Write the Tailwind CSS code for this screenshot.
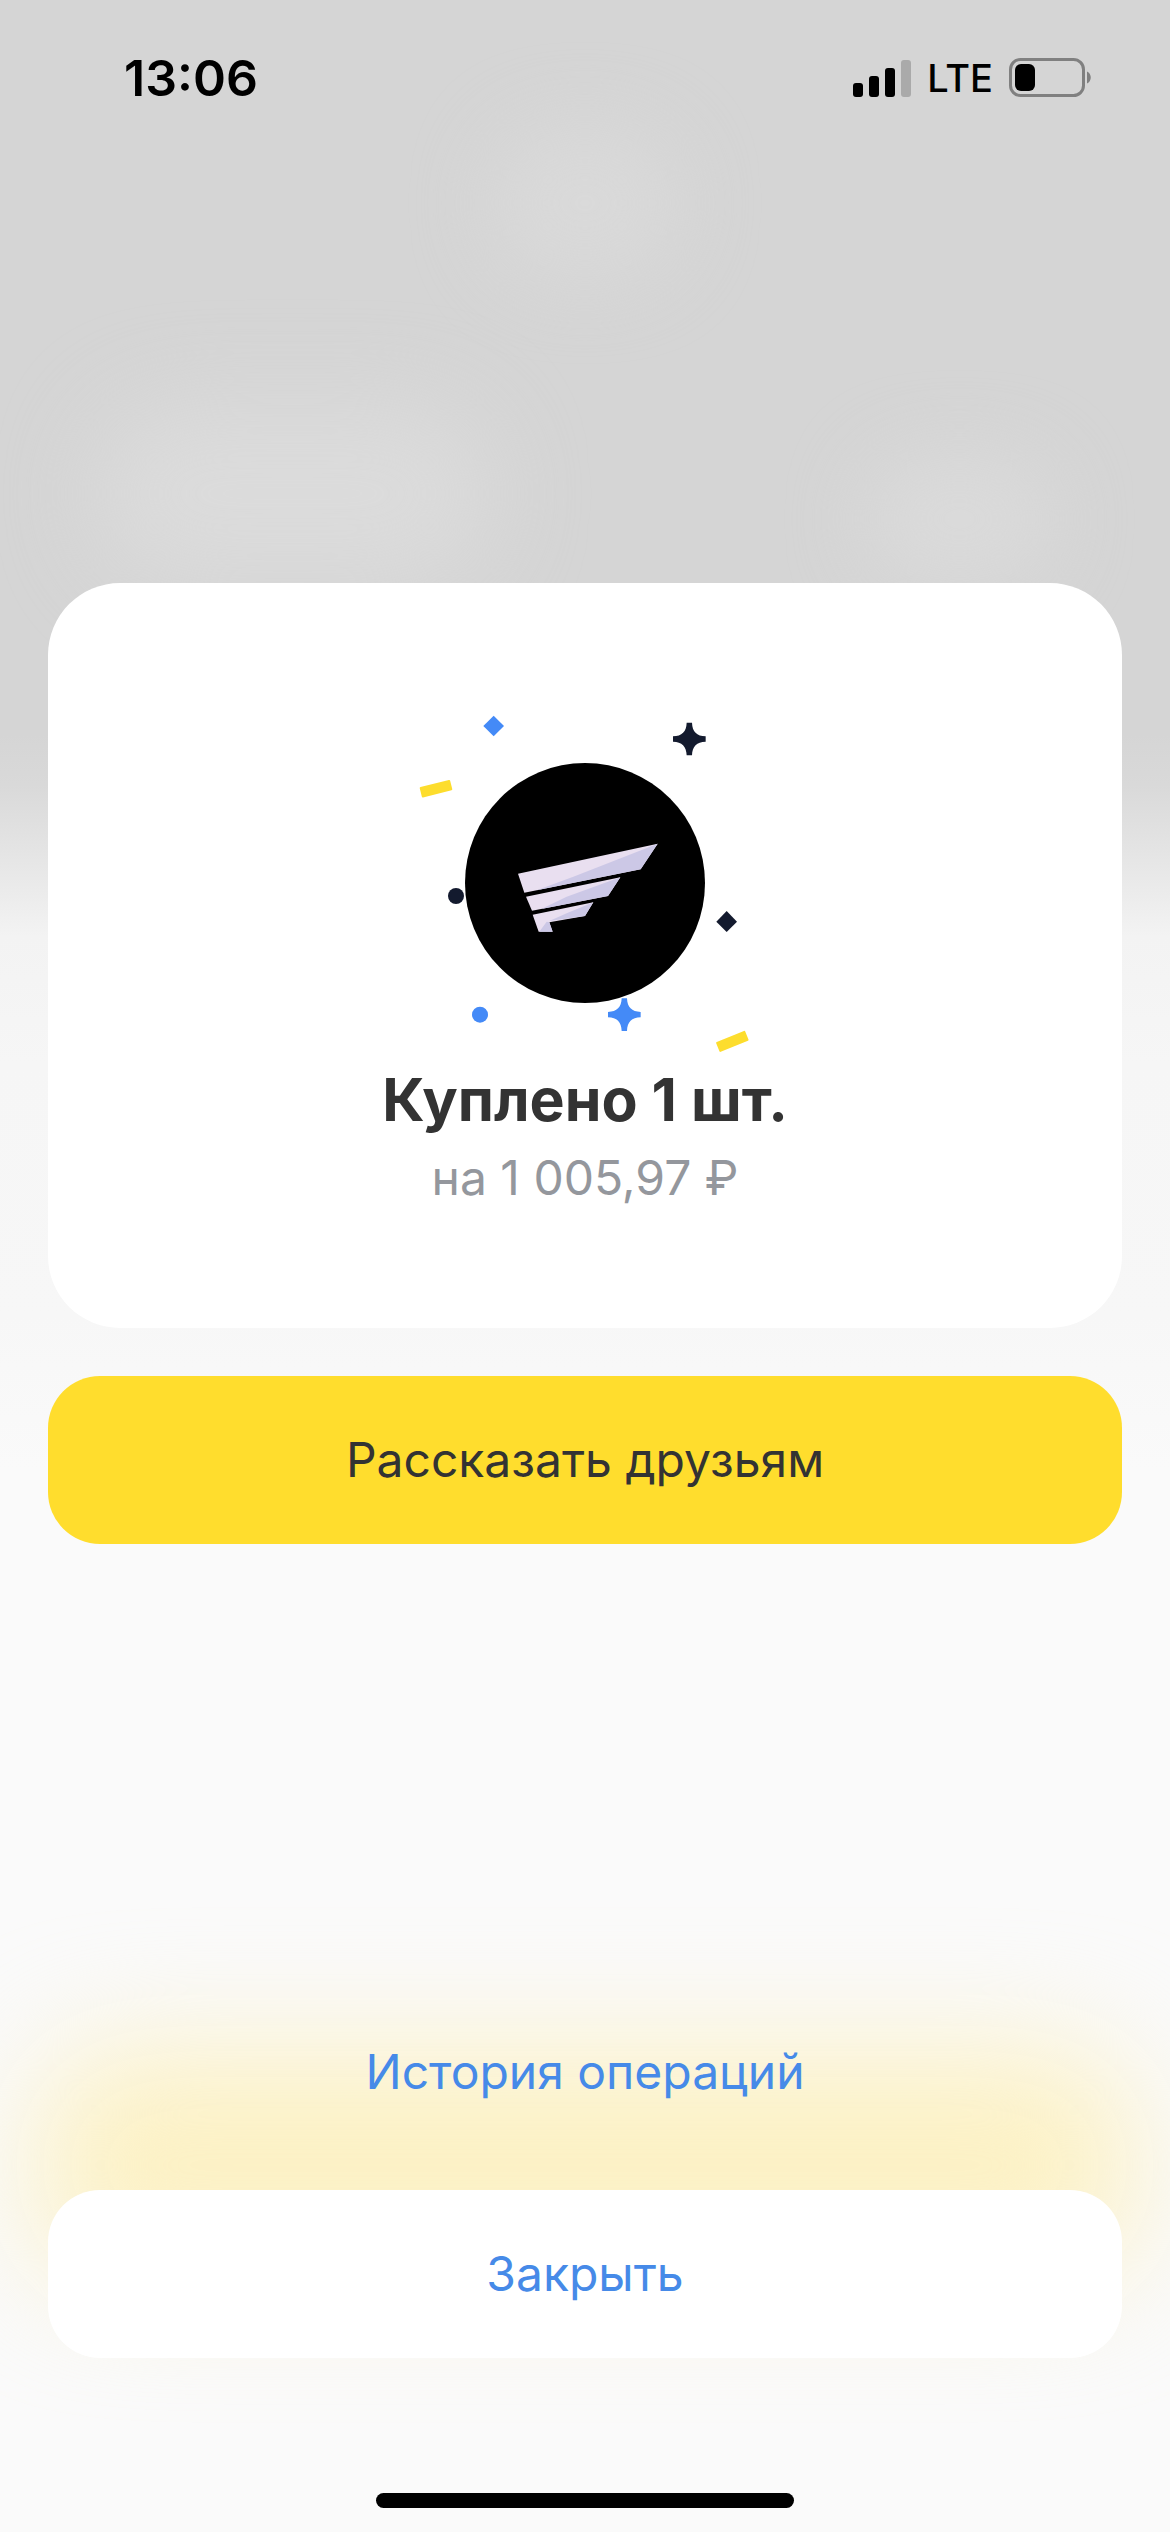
<!DOCTYPE html>
<html lang="ru">
<head>
    <meta charset="UTF-8">
    <meta name="viewport" content="width=device-width, initial-scale=1.0">
    <title>Покупка</title>
    <script src="https://cdn.jsdelivr.net/npm/@tailwindcss/browser@4"></script>
</head>
<body class="bg-[#fafafa] font-['Inter','Noto_Sans',sans-serif]">
<div class="relative isolate flex flex-col min-h-screen overflow-hidden bg-[linear-gradient(to_bottom,#d5d5d5_0%,#d5d5d5_29%,#d9d9d9_31%,#e6e6e6_34%,#f3f3f3_37%,#f6f6f6_42%,#f7f7f7_52%,#fafafa_58%)]">

    <!-- Blurred backdrop -->
    <div class="absolute inset-0 -z-10" aria-hidden="true">
        <div class="absolute top-[5%] left-[42%] w-[16%] h-[6%] rounded-full bg-[#d9d9d9] blur-[36px]"></div>
        <div class="absolute top-[16%] left-[8%] w-[34%] h-[7%] rounded-full bg-[#dbdbdb] blur-[44px]"></div>
        <div class="absolute top-[18%] left-[74%] w-[16%] h-[5%] rounded-full bg-[#dadada] blur-[36px]"></div>
        <div class="absolute bottom-[10%] left-[3%] right-[3%] h-[9%] rounded-[80px] bg-[#fcf1c4] blur-[60px]"></div>
    </div>

    <!-- Status bar -->
    <header class="flex items-center justify-between h-[156px] pl-[124px] pr-[78px] text-black">
        <span class="text-[50px] leading-[60px] font-semibold">13:06</span>
        <div class="flex items-center gap-4">
            <svg class="w-[58px] h-[38px]" viewBox="0 0 58 38" aria-hidden="true">
                <rect x="0" y="24" width="10" height="14" rx="3"/>
                <rect x="16" y="17" width="10" height="21" rx="3"/>
                <rect x="32" y="9" width="10" height="29" rx="3"/>
                <rect x="48" y="1" width="10" height="37" rx="3" fill="#aaaaaa"/>
            </svg>
            <span class="text-[38px] leading-[60px] font-medium">LTE</span>
            <svg class="w-[83px] h-[40px]" viewBox="0 0 83 40" aria-hidden="true">
                <rect x="1.5" y="1.5" width="73" height="36" rx="10" fill="none" stroke="#808080" stroke-width="3"/>
                <rect x="6" y="6" width="20" height="27" rx="6"/>
                <path d="M78 13.500c5 2 5 10 0 12z" fill="#808080"/>
            </svg>
        </div>
    </header>

    <main class="flex flex-col flex-grow px-12 pt-[427px] text-[48px] leading-[60px]">
        <section class="flex flex-col items-center bg-white rounded-[72px] pt-[117px] pb-[120px] text-center">
            <svg class="w-[370px] h-[370px]" viewBox="0 0 1110 1110" role="img" aria-label="Логотип">
                <defs>
                    <path id="spark" d="M-8-49H8C9-22 22-9 49-8V8C22 9 9 22 8 49H-8C-9 22-22 9-49 8V-8C-22-9-9-22-8-49z"/>
                </defs>
                <circle cx="555" cy="549" r="360"/>
                <!-- Wing -->
                <path d="M354 521L773 431L722 508L373 578z" fill="#e9dff0"/>
                <path d="M773 431L722 508L410 571L520 530z" fill="#ccc8e6"/>
                <path d="M378 590L661 532L624 588L396 632z" fill="#e9dff0"/>
                <path d="M661 532L624 588L424 627L500 590z" fill="#ccc8e6"/>
                <path d="M398 644L580 607L555 648L448 667L458 695H416z" fill="#e9dff0"/>
                <path d="M580 607L555 648L448 663L500 640zM440 665L448 667L458 695H418z" fill="#ccc8e6"/>
                <!-- Confetti -->
                <path d="M281 47l31 31-31 31-31-31z" fill="#448af7"/>
                <path d="M980 633l31 32-31 31-31-31z" fill="#131a2e"/>
                <circle cx="168" cy="588" r="24" fill="#131a2e"/>
                <circle cx="240" cy="944" r="24" fill="#448af7"/>
                <use href="#spark" x="868" y="117" fill="#131a2e"/>
                <use href="#spark" x="673" y="944" fill="#448af7"/>
                <rect x="-47" y="-16" width="94" height="32" rx="3" fill="#fddd2d" transform="translate(108 266) rotate(-14)"/>
                <rect x="-47" y="-16" width="94" height="32" rx="3" fill="#fddd2d" transform="translate(997 1024) rotate(-22)"/>
            </svg>
            <h1 class="text-[59px] leading-[60px] font-bold text-[#333333]">Куплено 1 шт.</h1>
            <p class="mt-[18px] text-[#94979d]">на 1 005,97 ₽</p>
        </section>

        <button type="button" class="mt-12 h-[168px] rounded-[52px] bg-[#ffdd2d] text-[#333333]">Рассказать друзьям</button>

        <div class="flex flex-col mt-auto">
            <button type="button" class="h-[168px] mb-[34px] text-[#468ae8]">История операций</button>
            <button type="button" class="h-[168px] rounded-[52px] bg-white text-[#468ae8]">Закрыть</button>
        </div>
    </main>

    <!-- Home indicator -->
    <footer class="flex justify-center pt-[135px] pb-6">
        <div class="w-[418px] h-[15px] rounded-full bg-black"></div>
    </footer>
</div>
</body>
</html>
